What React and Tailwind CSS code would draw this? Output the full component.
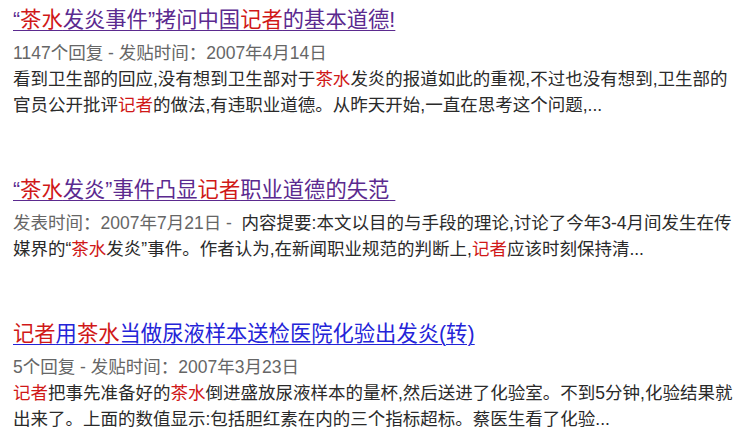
const font = {
  fontFamily: '"Liberation Sans", "Noto Sans CJK SC", sans-serif',
};

const R = ({ children }) => <span className="text-[#d01818]">{children}</span>;

const items = [
  {
    color: "text-[#5b2a8f]",
    title: (
      <>
        “<R>茶水</R>发炎事件”拷问中国<R>记者</R>的基本道德!
      </>
    ),
    meta: "1147个回复 - 发贴时间：2007年4月14日",
    lines: [
      <>
        看到卫生部的回应,没有想到卫生部对于<R>茶水</R>发炎的报道如此的重视,不过也没有想到,卫生部的
      </>,
      <>
        官员公开批评<R>记者</R>的做法,有违职业道德。从昨天开始,一直在思考这个问题,...
      </>,
    ],
  },
  {
    color: "text-[#5b2a8f]",
    title: (
      <>
        “<R>茶水</R>发炎”事件凸显<R>记者</R>职业道德的失范{"\u00a0"}
      </>
    ),
    meta: null,
    lines: [
      <>
        <span className="text-[#666]">发表时间：2007年7月21日 -</span>
        {"  "}内容提要:本文以目的与手段的理论,讨论了今年3-4月间发生在传
      </>,
      <>
        媒界的“<R>茶水</R>发炎”事件。作者认为,在新闻职业规范的判断上,<R>记者</R>应该时刻保持清...
      </>,
    ],
  },
  {
    color: "text-[#2424d8]",
    title: (
      <>
        <R>记者</R>用<R>茶水</R>当做尿液样本送检医院化验出发炎(转)
      </>
    ),
    meta: "5个回复 - 发贴时间：2007年3月23日",
    lines: [
      <>
        <R>记者</R>把事先准备好的<R>茶水</R>倒进盛放尿液样本的量杯,然后送进了化验室。不到5分钟,化验结果就
      </>,
      <>
        出来了。上面的数值显示:包括胆红素在内的三个指标超标。蔡医生看了化验...
      </>,
    ],
  },
];

export default function App() {
  return (
    <div className="min-h-screen w-[742px] bg-white pl-[13px] pt-[6px]" style={font}>
      {items.map((item, i) => (
        <div key={i} className={i > 0 ? "mt-[58px]" : ""}>
          <h3
            className={`whitespace-nowrap text-[21.3px] leading-[28px] underline decoration-1 underline-offset-[3px] ${item.color}`}
          >
            <a href="#">{item.title}</a>
          </h3>
          <div className="mt-[6px] text-[17.5px] leading-[26px] text-[#2a2a2a]">
            {item.meta && <div className="whitespace-nowrap text-[#666]">{item.meta}</div>}
            {item.lines.map((l, j) => (
              <div key={j} className="whitespace-pre">
                {l}
              </div>
            ))}
          </div>
        </div>
      ))}
    </div>
  );
}
